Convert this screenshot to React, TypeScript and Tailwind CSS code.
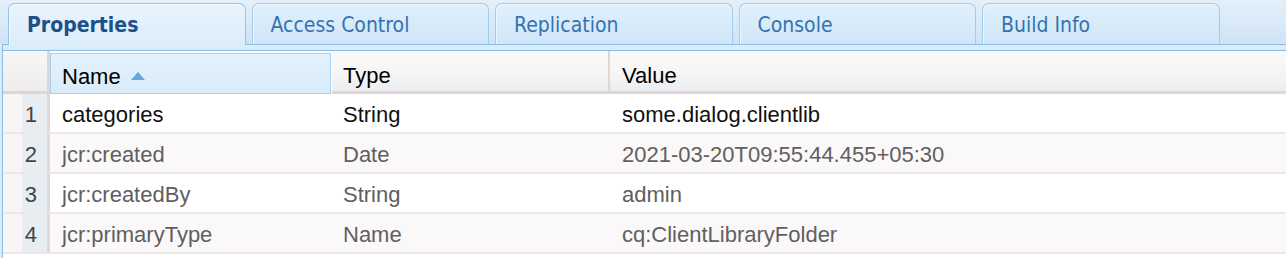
import React from "react";

const tabs = ["Properties", "Access Control", "Replication", "Console", "Build Info"];

const rows = [
  { n: 1, name: "categories", type: "String", value: "some.dialog.clientlib", dark: true },
  { n: 2, name: "jcr:created", type: "Date", value: "2021-03-20T09:55:44.455+05:30", dark: false },
  { n: 3, name: "jcr:createdBy", type: "String", value: "admin", dark: false },
  { n: 4, name: "jcr:primaryType", type: "Name", value: "cq:ClientLibraryFolder", dark: false },
];

export default function App() {
  return (
    <div className="w-[1286px] h-[258px] overflow-hidden flex flex-col bg-[#dde9f4] font-['Liberation_Sans',Arial,sans-serif]">
      {/* Tab strip */}
      <div className="h-[44px] shrink-0 flex items-end gap-[6px] pl-[8px] bg-linear-to-b from-[#e4f0fa] to-[#cfe3f5] font-['DejaVu_Sans_Condensed','DejaVu_Sans',sans-serif] text-[21px]">
        {tabs.map((t, i) =>
          i === 0 ? (
            <div
              key={t}
              className="relative z-10 w-[237.5px] h-[42px] -mb-px flex items-center pl-[18px] pt-[3px] rounded-t-[7px] border border-b-0 border-[#92c2e8] bg-linear-to-b from-[#e7f4fd] to-[#dcedfa] shadow-[inset_1px_1px_0_#f4faff] font-bold text-[#1d4f8b]"
            >
              {t}
            </div>
          ) : (
            <div
              key={t}
              className="w-[237.5px] h-[41px] flex items-center pl-[18px] pt-[3px] rounded-t-[7px] border border-b-0 border-[#a2cbec] bg-linear-to-b from-[#e0f0fc] to-[#d0e6f8] shadow-[inset_1px_1px_0_#eef7fe] text-[#3573b0]"
            >
              {t}
            </div>
          )
        )}
      </div>

      {/* Panel */}
      <div className="flex-1 ml-[2px] border-l border-t border-[#89bde6] bg-white">
        <div className="h-[6px] bg-[#dcedfa] border-b border-[#89bde6]" />

        {/* Header */}
        <div className="flex h-[43px] text-[22px] text-black">
          <div className="w-[47px] shrink-0 bg-linear-to-b from-[#f8f6f6] to-[#eeecec] border-r-[3px] border-b-[3px] border-[#e0d5d5]" />
          <div className="w-[282px] shrink-0 pt-[2px] pr-[1px] bg-white">
            <div className="h-full flex items-center pl-[11px] pt-[6px] border border-[#a9d0ef] bg-linear-to-b from-[#e3f1fc] to-[#d9ebfa]">
              <span>Name</span>
              <svg className="ml-[10px] mb-[1px]" width="14" height="8" viewBox="0 0 14 8">
                <polygon points="7,0 14,8 0,8" fill="#64a7dd" />
              </svg>
            </div>
          </div>
          <div className="w-[278px] shrink-0 flex items-center pl-[11px] pt-[8px] bg-linear-to-b from-[#f9f9f9] via-[#f6f6f6] to-[#eceef1] border-r-[2px] border-b-[3px] border-[#e0d6d6]">
            Type
          </div>
          <div className="flex-1 flex items-center pl-[12px] pt-[8px] bg-linear-to-b from-[#f9f9f9] via-[#f6f6f6] to-[#eceef1] border-b-[3px] border-[#e0d6d6]">
            Value
          </div>
        </div>

        {/* Rows */}
        {rows.map((r, i) => (
          <div
            key={r.n}
            className={`flex h-[40px] border-b-2 border-[#ede7e7] text-[22px] ${
              i % 2 === 1 ? "bg-[#faf8f8]" : "bg-white"
            } ${r.dark ? "text-[#111]" : "text-[#606060]"}`}
          >
            <div className="w-[47px] shrink-0 flex border-r-[3px] border-[#e2d7d7]">
              <div className="w-[19px] bg-[#f7f5f5]" />
              <div className="flex-1 flex items-center justify-end pr-[10px] pt-[3px] bg-[#e8edf2] text-[#444]">
                {r.n}
              </div>
            </div>
            <div className="w-[282px] shrink-0 flex items-center pl-[12px] pt-[3px]">{r.name}</div>
            <div className="w-[278px] shrink-0 flex items-center pl-[11px] pt-[3px]">{r.type}</div>
            <div className="flex-1 flex items-center pl-[12px] pt-[3px]">{r.value}</div>
          </div>
        ))}
      </div>
    </div>
  );
}
